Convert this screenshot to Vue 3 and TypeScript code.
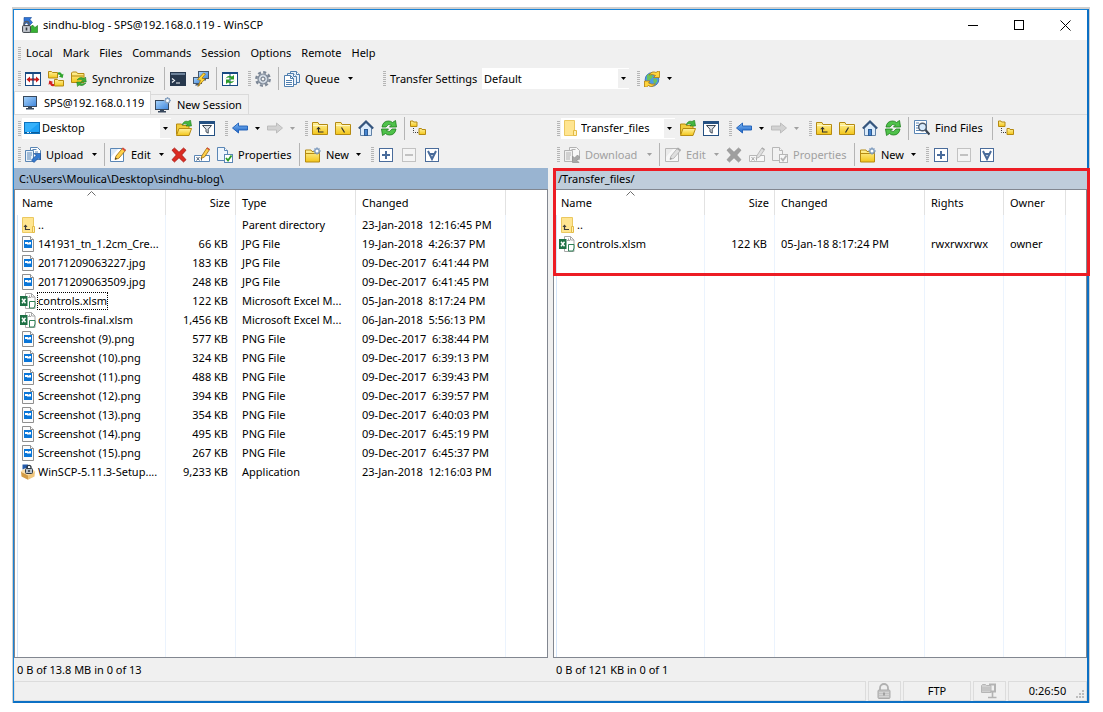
<script setup lang="ts">
import { ref } from 'vue'

interface FileRow {
  icon: string
  name: string
  size: string
  cells: string[]
  focused?: boolean
}

interface Pane {
  side: 'local' | 'remote'
  drive: string
  driveIcon: string
  rootIcon: string
  transfer: string
  transferIcon: string
  muted: boolean
  path: string
  columns: { label: string; cls: string }[]
  rows: FileRow[]
  summary: string
}

const menus = ['Local', 'Mark', 'Files', 'Commands', 'Session', 'Options', 'Remote', 'Help']
const preset = ref('Default')

const shot = (n: number, size: string, time: string): FileRow => ({
  icon: 'image',
  name: `Screenshot (${n}).png`,
  size,
  cells: ['PNG File', `09-Dec-2017  ${time}`],
})

const panes: Pane[] = [
  {
    side: 'local',
    drive: 'Desktop',
    driveIcon: 'desktop',
    rootIcon: 'root-local',
    transfer: 'Upload',
    transferIcon: 'upload',
    muted: false,
    path: 'C:\\Users\\Moulica\\Desktop\\sindhu-blog\\',
    columns: [
      { label: 'Name', cls: 'c-name' },
      { label: 'Size', cls: 'c-size' },
      { label: 'Type', cls: 'c-type' },
      { label: 'Changed', cls: 'c-date' },
    ],
    rows: [
      { icon: 'parent', name: '..', size: '', cells: ['Parent directory', '23-Jan-2018  12:16:45 PM'] },
      { icon: 'image', name: '141931_tn_1.2cm_Cre...', size: '66 KB', cells: ['JPG File', '19-Jan-2018  4:26:37 PM'] },
      { icon: 'image', name: '20171209063227.jpg', size: '183 KB', cells: ['JPG File', '09-Dec-2017  6:41:44 PM'] },
      { icon: 'image', name: '20171209063509.jpg', size: '248 KB', cells: ['JPG File', '09-Dec-2017  6:41:45 PM'] },
      { icon: 'excel', name: 'controls.xlsm', size: '122 KB', cells: ['Microsoft Excel M...', '05-Jan-2018  8:17:24 PM'], focused: true },
      { icon: 'excel', name: 'controls-final.xlsm', size: '1,456 KB', cells: ['Microsoft Excel M...', '06-Jan-2018  5:56:13 PM'] },
      shot(9, '577 KB', '6:38:44 PM'),
      shot(10, '324 KB', '6:39:13 PM'),
      shot(11, '488 KB', '6:39:43 PM'),
      shot(12, '394 KB', '6:39:57 PM'),
      shot(13, '354 KB', '6:40:03 PM'),
      shot(14, '495 KB', '6:45:19 PM'),
      shot(15, '267 KB', '6:45:37 PM'),
      { icon: 'setup', name: 'WinSCP-5.11.3-Setup....', size: '9,233 KB', cells: ['Application', '23-Jan-2018  12:16:03 PM'] },
    ],
    summary: '0 B of 13.8 MB in 0 of 13',
  },
  {
    side: 'remote',
    drive: 'Transfer_files',
    driveIcon: 'folder-plain',
    rootIcon: 'root-remote',
    transfer: 'Download',
    transferIcon: 'download',
    muted: true,
    path: '/Transfer_files/',
    columns: [
      { label: 'Name', cls: 'c-name' },
      { label: 'Size', cls: 'c-size' },
      { label: 'Changed', cls: 'c-date' },
      { label: 'Rights', cls: 'c-rights' },
      { label: 'Owner', cls: 'c-owner' },
    ],
    rows: [
      { icon: 'parent', name: '..', size: '', cells: ['', '', ''] },
      { icon: 'excel', name: 'controls.xlsm', size: '122 KB', cells: ['05-Jan-18 8:17:24 PM', 'rwxrwxrwx', 'owner'] },
    ],
    summary: '0 B of 121 KB in 0 of 1',
  },
]
</script>

<template>
  <svg class="sprite" aria-hidden="true">
    <defs>
      <linearGradient id="g-yellow" x1="0" y1="0" x2="0" y2="1">
        <stop offset="0" stop-color="#fff3a0" /><stop offset="1" stop-color="#f3c518" />
      </linearGradient>
      <linearGradient id="g-screen" x1="0" y1="0" x2="1" y2="1">
        <stop offset="0" stop-color="#a8d4fb" /><stop offset="1" stop-color="#3f86dc" />
      </linearGradient>
      <linearGradient id="g-blue" x1="0" y1="0" x2="0" y2="1">
        <stop offset="0" stop-color="#7db8f5" /><stop offset="1" stop-color="#1c62c4" />
      </linearGradient>
    </defs>
    <symbol id="i-app" viewBox="0 0 16 16">
      <path d="M2 .5h7.500l-1.500 2 2.500 3-3 3-3-2.500-2.500 2z" fill="#2f74d6" stroke="#174a96" stroke-width=".6" />
      <path d="M15.500 15.500h-8l2-2-2-2.500 3-3 2.500 2.500 2.500-2z" fill="#37b134" stroke="#157313" stroke-width=".6" />
      <path d="M2 9V7a2.500 2.500 0 0 1 5 0v2" fill="none" stroke="#565c66" stroke-width="1.400" />
      <rect x=".6" y="8.600" width="7.800" height="6.800" rx=".8" fill="#c6cbd2" stroke="#343a42" />
      <path d="M4.500 10.500v3" stroke="#343a42" stroke-width="1.600" />
    </symbol>
    <symbol id="i-compare" viewBox="0 0 16 16">
      <rect x=".5" y="1.500" width="15" height="13" fill="#fff" stroke="#174a82" />
      <path d="M0 2h16" stroke="#174a82" stroke-width="2" />
      <path d="M8 2v12" stroke="#174a82" stroke-width="1.400" />
      <path d="M1.500 8.500 5 5.500v2h6v-2l3.500 3-3.500 3v-2H5v2z" fill="#c61a1a" />
      <path d="M8 7v3" stroke="#174a82" />
    </symbol>
    <symbol id="i-syncdirs" viewBox="0 0 16 16">
      <path d="M.5.5h3l1 1h5v5.500h-9z" fill="url(#g-yellow)" stroke="#b58a12" />
      <path d="M6.500 8.500h3l1 1h5v5.500h-9z" fill="url(#g-yellow)" stroke="#b58a12" />
      <path d="M10 1.500q3-1 4 2l1.500-.8-.8 4.300-4-1.500 1.600-.8q-.8-1.500-2.300-1.200z" fill="#2fa32c" />
      <path d="M6 15q-3 1-4-2l-1.500.8.8-4.300 4 1.500-1.600.8q.8 1.500 2.300 1.200z" fill="#d32020" />
    </symbol>
    <symbol id="i-sync" viewBox="0 0 16 16">
      <path d="M.5 2 1.500 1h4l1 1.500h6.500v9H.5z" fill="url(#g-yellow)" stroke="#b58a12" />
      <path d="M1 5h11.500" stroke="#b58a12" />
      <path d="M6 9q3-4 7-1.500l1.500-1.500.8 5h-5l1.500-1.500q-2-1.500-5.800-.5z" fill="#3fae3a" stroke="#1d7a1a" stroke-width=".5" />
      <path d="M15 12q-3 4-7 2l-1.500 1.500-.8-4.500h5l-1.500 1.400q2 .9 5.800-.4z" fill="#3fae3a" stroke="#1d7a1a" stroke-width=".5" />
    </symbol>
    <symbol id="i-term" viewBox="0 0 16 16">
      <rect y="1" width="16" height="14" fill="#27384d" />
      <rect x="1" y="2" width="14" height="2" fill="#6c8199" />
      <path d="M2 7.500 4.500 9.500 2 11.500M6 12h4" fill="none" stroke="#f3f6fa" stroke-width="1.200" />
    </symbol>
    <symbol id="i-putty" viewBox="0 0 16 16">
      <rect x="5.500" y=".5" width="10" height="7" fill="url(#g-screen)" stroke="#44566c" />
      <path d="M9 8h4v1.500H9z" fill="#44566c" />
      <rect x=".5" y="6.500" width="8" height="6" fill="url(#g-screen)" stroke="#44566c" />
      <path d="M3 13h4v1.500H2z" fill="#44566c" />
      <path d="M10.500 2 4.500 8.500l3 .8L5 15.500 12 8l-3-.8 3.500-4.200z" fill="#ffd63a" stroke="#a8780d" stroke-width=".8" />
    </symbol>
    <symbol id="i-syncbrowse" viewBox="0 0 16 16">
      <rect x=".5" y="1.500" width="15" height="13" fill="#fff" stroke="#174a82" />
      <path d="M0 2h16" stroke="#174a82" stroke-width="2" />
      <path d="M8 3v11" stroke="#174a82" />
      <path d="M3.500 7.500Q6 3.500 10 5.500L12 4v4.500H7.500L9 7Q6.500 6 3.500 7.500z" fill="#2d9b2a" />
      <path d="M12.500 9.500Q10 13.500 6 11.500L4 13V8.500h4.500L7 10q2.500 1 5.500-.5z" fill="#2d9b2a" />
    </symbol>
    <symbol id="i-gear" viewBox="0 0 16 16">
      <circle cx="8" cy="8" r="6.700" fill="none" stroke="#7c8796" stroke-width="2.400" stroke-dasharray="3 2.260" />
      <circle cx="8" cy="8" r="5" fill="#c3cdd9" stroke="#7c8796" stroke-width="1.200" />
      <circle cx="8" cy="8" r="3.300" fill="none" stroke="#dce3eb" stroke-width="1" />
      <circle cx="8" cy="8" r="2" fill="#f3f3f3" stroke="#66707d" />
    </symbol>
    <symbol id="i-queue" viewBox="0 0 16 16">
      <path d="M6.500.5h6l3 3v8h-9z" fill="#e8f1fb" stroke="#4f7eae" />
      <path d="M12.500.5v3h3" fill="#fff" stroke="#4f7eae" />
      <path d="M3.500 2.500h6l3 3v8h-9z" fill="#e8f1fb" stroke="#4f7eae" />
      <path d="M9.500 2.500v3h3" fill="#fff" stroke="#4f7eae" />
      <path d="M.5 4.500h6l3 3v8h-9z" fill="#fff" stroke="#4f7eae" />
      <path d="M6.500 4.500v3h3M2 9.500h6M2 11.500h6M2 13.500h6" fill="none" stroke="#4f7eae" />
    </symbol>
    <symbol id="i-globe" viewBox="0 0 16 16">
      <circle cx="8" cy="8.500" r="6.800" fill="#4e9be6" stroke="#2b68a8" stroke-width=".8" />
      <path d="M3 4q3-2 5 0t-1 4-4 1zM9 8q3-1 4 1t-3 4z" fill="#6cc35c" />
      <path d="M5 4Q8-.5 12 1.500L14 .2h1.500V6.500H9.500l2-2Q8 2.800 5 4z" fill="#ffd43c" stroke="#b07d0a" stroke-width=".8" />
      <path d="M11.500 13Q8 17 4.500 14.500L2.500 16H.5V10h5.500l-1.500 2q3 1.800 7 1z" fill="#ffd43c" stroke="#b07d0a" stroke-width=".8" />
    </symbol>
    <symbol id="i-monitor" viewBox="0 0 16 16">
      <rect x="1.500" y="1.500" width="13" height="10" fill="url(#g-screen)" stroke="#38485c" />
      <path d="M6 12h4v1h2v1.500H4V13h2z" fill="#38485c" />
    </symbol>
    <symbol id="i-newsession" viewBox="0 0 16 16">
      <rect x=".5" y="3.500" width="13" height="9" fill="url(#g-screen)" stroke="#38485c" />
      <path d="M5 13h4v1h2v1.500H3V14h2z" fill="#38485c" />
      <circle cx="12.500" cy="3.500" r="2.200" fill="#fff" stroke="#8ba5c2" stroke-width="1.400" />
      <path d="M12.500-.2v1.500M12.500 5.700v1.500M8.800 3.500h1.500M14.700 3.500H16M10 1l1 1M15 1l-1 1M10 6l1-1M15 6l-1-1" stroke="#8ba5c2" />
    </symbol>
    <symbol id="i-desktop" viewBox="0 0 16 16">
      <rect x=".5" y="2.500" width="15" height="11" fill="#1ea0f5" stroke="#0b72bd" />
      <path d="M1 3h14L3 13H1z" fill="#35b1fb" />
      <path d="M1 12.500h14" stroke="#0c5d9c" />
      <path d="M3 12.500h2M6 12.500h1" stroke="#d5ecfc" />
    </symbol>
    <symbol id="i-folder-plain" viewBox="0 0 16 16">
      <path d="M1.500.5h10v15h-10z" fill="#ffe590" stroke="#ebc860" />
      <path d="M10.500 10.500h3v5h-3z" fill="#ffefb4" stroke="#e3bb45" />
    </symbol>
    <symbol id="i-open" viewBox="0 0 16 16">
      <path d="M.5 14.500V4h5l1 1.500h6.500v3" fill="#f2cd3c" stroke="#b58a12" />
      <path d="M.5 15.500 3 8.500h12.500L13 15.500z" fill="url(#g-yellow)" stroke="#b58a12" />
      <path d="M6 5Q8 0 12 1.500L14.500.2 15.500 6H10L11.500 4.500Q8.500 3 6 5z" fill="#44b640" stroke="#1d7a1a" stroke-width=".6" />
    </symbol>
    <symbol id="i-filter" viewBox="0 0 16 16">
      <rect x=".5" y="1.500" width="15" height="14" fill="#fff" stroke="#245082" />
      <path d="M0 2.500h16" stroke="#245082" stroke-width="3" />
      <path d="M3.500 5.500h9L9.200 9.200v4l-2.200-1.400V9.200z" fill="#dfe3e8" stroke="#3c4652" />
    </symbol>
    <symbol id="i-back" viewBox="0 0 16 16">
      <path d="M.5 8 6.500 3v3h9v4h-9v3z" fill="url(#g-blue)" stroke="#1a5bb5" stroke-width=".9" />
    </symbol>
    <symbol id="i-fwd" viewBox="0 0 16 16">
      <path d="M15.500 8 9.500 3v3h-9v4h9v3z" fill="#d2d2d2" stroke="#b9b9b9" stroke-width=".9" />
    </symbol>
    <symbol id="i-folder" viewBox="0 0 16 16">
      <path d="M.5 14.500V2.500h5.500l1 2h8.500v10z" fill="url(#g-yellow)" stroke="#b58a12" />
      <path d="M1 5.500h14" stroke="#fff7c4" />
    </symbol>
    <symbol id="i-up" viewBox="0 0 16 16">
      <use href="#i-folder" />
      <path d="M6.500 7.500v4.500h5" fill="none" stroke="#2d2d2d" stroke-width="1.100" />
      <path d="M4.200 9.200 6.500 6.700 8.800 9.200z" fill="#2d2d2d" />
    </symbol>
    <symbol id="i-root-local" viewBox="0 0 16 16">
      <use href="#i-folder" /><path d="m6.500 7.500 3 5" stroke="#2d2d2d" stroke-width="1.200" />
    </symbol>
    <symbol id="i-root-remote" viewBox="0 0 16 16">
      <use href="#i-folder" /><path d="m9.500 7.500-3 5" stroke="#2d2d2d" stroke-width="1.200" />
    </symbol>
    <symbol id="i-home" viewBox="0 0 16 16">
      <path d="M2.500 8v7.500h11V8L8 2.500z" fill="#dcebfa" stroke="#6182a8" />
      <rect x="6.500" y="9.500" width="3" height="6" fill="#4886cf" stroke="#2d5c95" />
      <path d="M.8 8.500 8 1.500l7.200 7" fill="none" stroke="#35557d" stroke-width="2" />
    </symbol>
    <symbol id="i-refresh" viewBox="0 0 16 16">
      <path d="M1 7Q2 1 7.500 1q2.500 0 4 1.500L14.500.5 15.500 7H8.500l2-2Q7 3 5 7z" fill="#4fc24a" stroke="#1c7d1a" stroke-width=".8" />
      <path d="M15 9q-1 6-6.500 6-2.500 0-4-1.500l-3 2L.5 9h7l-2 2q3.500 2 5.500-2z" fill="#4fc24a" stroke="#1c7d1a" stroke-width=".8" />
    </symbol>
    <symbol id="i-tree" viewBox="0 0 16 16">
      <path d="M.5 1h2.500l.5 1h3.500v4.500h-6.500z" fill="url(#g-yellow)" stroke="#b58a12" />
      <path d="M9 8.500h2.500l.5 1h3.500v5H9z" fill="url(#g-yellow)" stroke="#b58a12" />
      <path d="M3.500 8v4.500H8" fill="none" stroke="#3a3a3a" stroke-dasharray="1 1" />
    </symbol>
    <symbol id="i-upload" viewBox="0 0 16 16">
      <path d="M5.500.5h7l3 3v9h-10z" fill="#fff" stroke="#5a86b5" />
      <path d="M.5 3.500h8v11h-8z" fill="#eaf2fa" stroke="#5a86b5" />
      <path d="M2 6h5M2 8h5M2 10h4M2 12h4M7.500 2.500h4M10 5h3" stroke="#5a86b5" />
      <path d="M9 6.500h6.500V13L13.500 11l-4.500 4.500-2.500-2.500L11 8.500z" fill="#3379cf" stroke="#1c4f93" stroke-width=".7" />
    </symbol>
    <symbol id="i-download" viewBox="0 0 16 16">
      <path d="M5.500.5h7l3 3v9h-10z" fill="#f7f7f7" stroke="#b3b3b3" />
      <path d="M.5 3.500h8v11h-8z" fill="#f0f0f0" stroke="#b3b3b3" />
      <path d="M2 6h5M2 8h5M2 10h4M2 12h4M7.500 2.500h4" stroke="#b3b3b3" />
      <path d="M15 15.500H8.500V9l2 2 3-3 2.300 2.300-3 3z" fill="#a8a8a8" stroke="#8f8f8f" stroke-width=".7" />
    </symbol>
    <symbol id="i-edit" viewBox="0 0 16 16">
      <path d="M.5 1.500h13v13H.5z" fill="#fff" stroke="#5a86b5" />
      <path d="M1 2h7L1 10z" fill="#dbe9f7" />
      <path d="M5 12.500 6 9 12.500 1.200 15.500 3.500 8.800 11.300z" fill="#ffd04a" stroke="#96690f" stroke-width=".8" />
      <path d="M11.800 2 13 .6l3 2.200-1.200 1.500z" fill="#d84c3f" />
      <path d="M5 12.500 5.500 10.500 7 11.700z" fill="#333" />
    </symbol>
    <symbol id="i-delete" viewBox="0 0 16 16">
      <path d="M1 3.200 3.500 1 8 5.300 12.500 1 15 3.200 10.700 8 15 12.700 12.500 15 8 10.700 3.500 15 1 12.700 5.300 8z" fill="#dc2b22" stroke="#a3150f" stroke-width=".8" />
    </symbol>
    <symbol id="i-rename" viewBox="0 0 16 16">
      <path d="M.5 8.500h15v6H.5z" fill="#fff" stroke="#5a86b5" />
      <path d="m2.500 10 3 3.500M5.500 10l-3 3.500M7.500 10v3.500" stroke="#4a5f78" />
      <path d="M7 11.500 8 8.500 13 .8 15.600 2.500 10.500 10z" fill="#ffd04a" stroke="#96690f" stroke-width=".8" />
      <path d="M12.500 1.500 13.200.4l2.600 1.700-.8 1.200z" fill="#d84c3f" />
    </symbol>
    <symbol id="i-props" viewBox="0 0 16 16">
      <path d="M.5.5h7l3 3v10H.5z" fill="#eff6fd" stroke="#5a86b5" />
      <path d="M7.500.5v3h3" fill="#fff" stroke="#5a86b5" />
      <rect x="7.500" y="7.500" width="8" height="8" fill="#fff" stroke="#5a86b5" />
      <path d="m9 11 2 2.500 3.500-5" fill="none" stroke="#2a9c27" stroke-width="1.800" />
    </symbol>
    <symbol id="i-newfile" viewBox="0 0 16 16">
      <path d="M.5 15V3h5.500l1 1.500h7.500V15z" fill="url(#g-yellow)" stroke="#b58a12" />
      <path d="M1 6.500h13" stroke="#b58a12" />
      <circle cx="12" cy="4" r="2.200" fill="#fff" stroke="#7f9cbe" stroke-width="1.400" />
      <path d="M12 .2v1.500M12 6.300v1.500M8.200 4h1.500M14.300 4H16M9.500 1.500l1 1M14.500 1.500l-1 1M9.500 6.500l1-1M14.500 6.500l-1-1" stroke="#7f9cbe" />
    </symbol>
    <symbol id="i-plus" viewBox="0 0 16 16">
      <rect x="1.500" y="1.500" width="13" height="13" fill="#fff" stroke="#4a6c9b" />
      <path d="M4 8h8M8 4v8" stroke="#4a6c9b" stroke-width="2" />
    </symbol>
    <symbol id="i-minus" viewBox="0 0 16 16">
      <rect x="1.500" y="1.500" width="13" height="13" fill="#f4f4f4" stroke="#c2c2c2" />
      <path d="M4 8h8" stroke="#c2c2c2" stroke-width="2" />
    </symbol>
    <symbol id="i-invert" viewBox="0 0 16 16">
      <rect x="1.500" y="1.500" width="13" height="13" fill="#fff" stroke="#4a6c9b" />
      <path d="m4 4 4 8 4-8M5 7h6" fill="none" stroke="#4a6c9b" stroke-width="2" />
    </symbol>
    <symbol id="i-find" viewBox="0 0 16 16">
      <path d="M.5.500h12v13H.5z" fill="#fff" stroke="#5a86b5" />
      <path d="M2 3h3M2 5.500h3M2 8h3M2 10.500h4" stroke="#5a86b5" />
      <circle cx="8.500" cy="7" r="3.800" fill="#d5e9fb" stroke="#4c5a6b" stroke-width="1.400" />
      <path d="m11.500 10 4 4.500" stroke="#39434f" stroke-width="2.200" />
    </symbol>
    <symbol id="i-parent" viewBox="0 0 16 16">
      <path d="M2.500.5h11v15h-11z" fill="#ffe590" stroke="#ebc860" />
      <path d="M12.500 9.500h2v6h-2z" fill="#ffefb4" stroke="#e3bb45" />
      <path d="M5.500 8.500v4H10" fill="none" stroke="#3b3b3b" stroke-width="1.200" />
      <path d="M3.500 10 5.500 7.500 7.500 10z" fill="#3b3b3b" />
    </symbol>
    <symbol id="i-image" viewBox="0 0 16 16">
      <path d="M2.500.5h8l3 3v12h-11z" fill="#fbfbfb" stroke="#8f8f8f" />
      <path d="M10.500.5v3h3" fill="#fff" stroke="#8f8f8f" />
      <rect x="4" y="4" width="8" height="8" fill="#0a76d8" />
      <path d="M5 6h3l.5 1 1-1H11v2l-1 1-1-1-1 1-1-1H5z" fill="#fff" />
    </symbol>
    <symbol id="i-excel" viewBox="0 0 16 16">
      <path d="M5.500.5h6l3.500 3.500v11.500H5.500z" fill="#fff" stroke="#a8a8a8" />
      <path d="M11.500.5v3.500h3.500M8 4.500h3M9.500 2.500v2" fill="none" stroke="#a8a8a8" />
      <path d="M9.500 8.500h5.500v3.500l-1 3h-4.500z" fill="#fff" stroke="#2f8157" />
      <rect y="3" width="7.500" height="10" fill="#1d7044" />
      <path d="m2 5.800 3.500 4.500M5.500 5.800 2 10.300" stroke="#fff" stroke-width="1.400" />
    </symbol>
    <symbol id="i-setup" viewBox="0 0 16 16">
      <path d="M1 7.500 8 11v4.800L1.500 12.500z" fill="#d39c46" />
      <path d="M15 7.500 8 11v4.800L14.500 12.500z" fill="#f0c67c" />
      <path d="M.5 7.500 4 5l4 3L12 5l3.500 2.500-7.500 4z" fill="#f8dca5" />
      <path d="M2.500.5h5.500v5l-2-1.500-3.500 1.500z" fill="#255cab" />
      <path d="M7 4.500V3.300a2 2 0 0 1 4 0v1.200" fill="none" stroke="#303841" stroke-width="1.300" />
      <rect x="5.500" y="4.500" width="7" height="5" rx="1" fill="#b7c1cd" stroke="#303841" />
      <path d="M9 6v2" stroke="#303841" stroke-width="1.500" />
    </symbol>
    <symbol id="i-lock" viewBox="0 0 16 16">
      <path d="M4 7.500V5a4 4 0 0 1 8 0v2.500" fill="none" stroke="#b1b1b1" stroke-width="1.800" />
      <rect x="2" y="7" width="12" height="8.500" rx="1" fill="#c3c3c3" stroke="#ababab" />
      <path d="M3 9.500h10M3 11.500h10M3 13.500h10" stroke="#d4d4d4" /><path d="M8 9.500v3" stroke="#8f8f8f" stroke-width="1.400" />
    </symbol>
    <symbol id="i-zip" viewBox="0 0 16 16">
      <path d="M.5 2.500 1.500 1.500h3l1 1h4.500v7H.5z" fill="#d0d0d0" stroke="#b6b6b6" />
      <path d="M1 5h8.500M1 7h8.500" stroke="#bababa" />
      <path d="M8 1.500h6v7h-4.500" fill="none" stroke="#b3b3b3" stroke-width="2" />
      <path d="M11.500 9v5M7 14.500h8.500" fill="none" stroke="#b3b3b3" stroke-width="1.600" />
    </symbol>
    <symbol id="i-caret" viewBox="0 0 5 3"><path d="M0 0h5L2.500 3z" fill="currentColor" /></symbol>
  </svg>

  <main class="window">
    <header class="title">
      <svg class="ic"><use href="#i-app" /></svg>
      <h1>sindhu-blog - SPS@192.168.0.119 - WinSCP</h1>
      <div class="winctl">
        <button type="button" aria-label="Minimize"><svg viewBox="0 0 11 11"><path d="M0 5.500h10" /></svg></button>
        <button type="button" aria-label="Maximize"><svg viewBox="0 0 11 11"><rect x=".5" y=".5" width="9" height="9" /></svg></button>
        <button type="button" aria-label="Close"><svg viewBox="0 0 11 11"><path d="m.5.5 10 10M10.500.5l-10 10" /></svg></button>
      </div>
    </header>

    <nav class="menu">
      <span class="grip"></span>
      <button v-for="m in menus" :key="m" type="button">{{ m }}</button>
    </nav>

    <div class="toolbar main-bar">
      <div class="band b-sync">
        <span class="grip"></span>
        <button type="button" class="tb" aria-label="Compare directories"><svg class="ic"><use href="#i-compare" /></svg></button>
        <button type="button" class="tb" aria-label="Synchronize directories"><svg class="ic"><use href="#i-syncdirs" /></svg></button>
        <button type="button" class="tb w-sync"><svg class="ic"><use href="#i-sync" /></svg>Synchronize</button>
        <span class="sep"></span>
        <button type="button" class="tb" aria-label="Open terminal"><svg class="ic"><use href="#i-term" /></svg></button>
        <button type="button" class="tb" aria-label="Open in PuTTY"><svg class="ic"><use href="#i-putty" /></svg></button>
        <span class="sep"></span>
        <button type="button" class="tb" aria-label="Synchronize browsing"><svg class="ic"><use href="#i-syncbrowse" /></svg></button>
      </div>
      <div class="band b-queue">
        <span class="grip"></span>
        <button type="button" class="tb" aria-label="Preferences"><svg class="ic"><use href="#i-gear" /></svg></button>
        <span class="sep"></span>
        <button type="button" class="tb w-queue"><svg class="ic"><use href="#i-queue" /></svg>Queue<svg class="caret"><use href="#i-caret" /></svg></button>
      </div>
      <div class="band b-preset">
        <span class="grip"></span>
        <label for="preset">Transfer Settings</label>
        <div class="combo">
          <select id="preset" v-model="preset"><option>Default</option></select>
          <span class="drop"><svg class="caret"><use href="#i-caret" /></svg></span>
        </div>
      </div>
      <div class="band">
        <span class="grip"></span>
        <button type="button" class="tb w-arrow" aria-label="Transfer options"><svg class="ic"><use href="#i-globe" /></svg><svg class="caret"><use href="#i-caret" /></svg></button>
      </div>
    </div>

    <div class="tabs">
      <button type="button" class="tab active"><svg class="ic"><use href="#i-monitor" /></svg>SPS@192.168.0.119</button>
      <button type="button" class="tab"><svg class="ic"><use href="#i-newsession" /></svg>New Session</button>
    </div>

    <div class="panes">
      <section v-for="p in panes" :key="p.side" class="pane" :class="p.side">
        <div class="toolbar nav-bar">
          <div class="band b-drive">
            <span class="grip"></span>
            <div class="combo">
              <svg class="ic"><use :href="`#i-${p.driveIcon}`" /></svg>
              <select :aria-label="`${p.side} directory`"><option>{{ p.drive }}</option></select>
              <span class="drop"><svg class="caret"><use href="#i-caret" /></svg></span>
            </div>
            <button type="button" class="tb" aria-label="Open directory"><svg class="ic"><use href="#i-open" /></svg></button>
            <button type="button" class="tb" aria-label="Filter"><svg class="ic"><use href="#i-filter" /></svg></button>
          </div>
          <div class="band b-history">
            <span class="grip"></span>
            <button type="button" class="tb w-arrow" aria-label="Back"><svg class="ic"><use href="#i-back" /></svg><svg class="caret"><use href="#i-caret" /></svg></button>
            <button type="button" class="tb w-arrow" aria-label="Forward" disabled><svg class="ic"><use href="#i-fwd" /></svg><svg class="caret"><use href="#i-caret" /></svg></button>
          </div>
          <div class="band">
            <span class="grip"></span>
            <button type="button" class="tb" aria-label="Parent directory"><svg class="ic"><use href="#i-up" /></svg></button>
            <button type="button" class="tb" aria-label="Root directory"><svg class="ic"><use :href="`#i-${p.rootIcon}`" /></svg></button>
            <button type="button" class="tb" aria-label="Home directory"><svg class="ic"><use href="#i-home" /></svg></button>
            <button type="button" class="tb" aria-label="Refresh"><svg class="ic"><use href="#i-refresh" /></svg></button>
            <span class="sep"></span>
            <template v-if="p.side === 'remote'">
              <button type="button" class="tb w-find"><svg class="ic"><use href="#i-find" /></svg>Find Files</button>
              <span class="sep"></span>
            </template>
            <button type="button" class="tb" aria-label="Directory tree"><svg class="ic"><use href="#i-tree" /></svg></button>
          </div>
        </div>

        <div class="toolbar file-bar">
          <div class="band b-files">
            <span class="grip"></span>
            <button type="button" class="tb w-transfer" :disabled="p.muted"><svg class="ic"><use :href="`#i-${p.transferIcon}`" /></svg>{{ p.transfer }}<svg class="caret"><use href="#i-caret" /></svg></button>
            <span class="sep"></span>
            <button type="button" class="tb w-edit" :disabled="p.muted"><svg class="ic gray"><use href="#i-edit" /></svg>Edit<svg class="caret"><use href="#i-caret" /></svg></button>
            <button type="button" class="tb" aria-label="Delete" :disabled="p.muted"><svg class="ic gray"><use href="#i-delete" /></svg></button>
            <button type="button" class="tb" aria-label="Rename" :disabled="p.muted"><svg class="ic gray"><use href="#i-rename" /></svg></button>
            <button type="button" class="tb w-props" :disabled="p.muted"><svg class="ic gray"><use href="#i-props" /></svg>Properties</button>
            <span class="sep"></span>
            <button type="button" class="tb w-new"><svg class="ic"><use href="#i-newfile" /></svg>New<svg class="caret"><use href="#i-caret" /></svg></button>
          </div>
          <div class="band">
            <span class="grip"></span>
            <button type="button" class="tb" aria-label="Select files"><svg class="ic"><use href="#i-plus" /></svg></button>
            <button type="button" class="tb" aria-label="Unselect files" disabled><svg class="ic"><use href="#i-minus" /></svg></button>
            <button type="button" class="tb" aria-label="Invert selection"><svg class="ic"><use href="#i-invert" /></svg></button>
          </div>
        </div>

        <div class="browser">
          <div class="path">{{ p.path }}</div>
          <div class="list">
            <table>
              <colgroup>
                <col v-for="c in p.columns" :key="c.label" :class="c.cls" />
                <col />
              </colgroup>
              <thead>
                <tr>
                  <th v-for="(c, i) in p.columns" :key="c.label" scope="col" :class="c.cls">
                    {{ c.label }}
                    <svg v-if="i === 0" class="sort" viewBox="0 0 9 5"><path d="M.5 4.500 4.500.5l4 4" /></svg>
                  </th>
                  <td></td>
                </tr>
              </thead>
              <tbody>
                <tr v-for="r in p.rows" :key="r.name" class="row">
                  <td class="c-name">
                    <span class="file"><svg class="ic"><use :href="`#i-${r.icon}`" /></svg><span class="fname" :class="{ focused: r.focused }">{{ r.name }}</span></span>
                  </td>
                  <td class="c-size">{{ r.size }}</td>
                  <td v-for="(c, i) in r.cells" :key="i">{{ c }}</td>
                  <td></td>
                </tr>
                <tr class="fill">
                  <td v-for="c in p.columns" :key="c.label"></td>
                  <td></td>
                </tr>
              </tbody>
            </table>
          </div>
          <div v-if="p.side === 'remote'" class="marker"></div>
        </div>
        <div class="summary">{{ p.summary }}</div>
      </section>
    </div>

    <footer class="status">
      <div class="cell grow"></div>
      <div class="cell small"><svg class="ic"><use href="#i-lock" /></svg></div>
      <div class="cell proto">FTP</div>
      <div class="cell small"><svg class="ic"><use href="#i-zip" /></svg></div>
      <div class="cell time">0:26:50
        <svg class="resize" viewBox="0 0 9 9"><path d="M6 0h2v2H6zM3 3h2v2H3zM6 3h2v2H6zM0 6h2v2H0zM3 6h2v2H3zM6 6h2v2H6z" /></svg>
      </div>
    </footer>
  </main>
</template>

<style>
html,
body,
#app {
  height: 100%;
}
body {
  background: #fff;
}
#app {
  box-sizing: border-box;
  padding: 9px 14px 9px 13px;
}
</style>

<style scoped>
* {
  box-sizing: border-box;
}
.sprite {
  position: absolute;
  width: 0;
  height: 0;
}
.window {
  display: flex;
  flex-direction: column;
  height: 100%;
  background: #f0f0f0;
  border: 1px solid #1883d7;
  border-right: 2px solid #0c70c4;
  border-bottom: 2px solid #0c70c4;
  box-shadow: 0 -1px 0 1px #cfcfcf;
  color: #000;
  font: 11px/16px "Noto Sans", "Open Sans", sans-serif;
  white-space: nowrap;
}
button,
select {
  font: inherit;
  color: inherit;
  background: none;
  border: 0;
  padding: 0;
  margin: 0;
}
.ic {
  width: 16px;
  height: 16px;
  flex: none;
}
.caret {
  width: 5px;
  height: 3px;
  flex: none;
}
.title {
  display: flex;
  align-items: center;
  height: 30px;
  flex: none;
  padding-left: 8px;
  gap: 5px;
  background: #fff;
}
.title h1 {
  font: inherit;
  margin: 0;
  flex: 1;
}
.winctl {
  display: flex;
  margin-right: -1px;
}
.winctl button {
  width: 46px;
  height: 30px;
  display: grid;
  place-items: center;
}
.winctl svg {
  width: 11px;
  height: 11px;
  fill: none;
  stroke: #000;
}
.menu {
  display: flex;
  align-items: center;
  height: 26px;
  flex: none;
  padding-left: 4px;
  gap: 10px;
}
.grip {
  width: 3px;
  height: 15px;
  margin-right: 1px;
  flex: none;
  background: repeating-linear-gradient(#b5b5b5 0 1px, transparent 1px 2px);
}
.menu .grip {
  height: 13px;
  margin-right: -5px;
}
.toolbar {
  display: flex;
  flex: none;
}
.main-bar {
  height: 25px;
}
.nav-bar {
  height: 26px;
}
.file-bar {
  height: 27px;
}
.band {
  display: flex;
  align-items: center;
  flex: none;
  padding-left: 4px;
}
.tb {
  display: flex;
  align-items: center;
  gap: 5px;
  width: 23px;
  height: 22px;
  flex: none;
  padding: 0 4px 0 3px;
}
.tb .caret {
  margin-left: auto;
}
.tb:disabled {
  color: #a0a0a0;
}
.tb:disabled .gray {
  filter: grayscale(1);
  opacity: 0.5;
}
.sep {
  width: 6px;
  height: 23px;
  flex: none;
  background: linear-gradient(#b4b4b4, #b4b4b4) 3px 0 / 1px 100% no-repeat;
}
.b-sync {
  width: 230px;
}
.b-queue {
  width: 135px;
}
.b-preset {
  width: 254px;
}
.b-preset label {
  width: 95px;
  padding-left: 3px;
}
.w-sync {
  width: 93px;
}
.w-queue {
  width: 76px;
}
.w-arrow {
  width: 35px;
}
.combo {
  position: relative;
  display: flex;
  align-items: center;
  flex: 1;
  height: 21px;
  margin-right: 2px;
  padding-left: 2px;
  background: #fff;
}
.b-preset .combo {
  margin-right: 4px;
}
.combo select {
  appearance: none;
  flex: 1;
  min-width: 0;
  padding-left: 2px;
  outline: 0;
}
.b-preset select {
  padding-left: 0;
}
.drop {
  position: absolute;
  top: 1px;
  right: 0;
  bottom: 1px;
  width: 11px;
  display: grid;
  place-items: center;
  background: #f0f0f0;
  pointer-events: none;
}
.tabs {
  display: flex;
  align-items: flex-end;
  height: 24px;
  flex: none;
  border-bottom: 1px solid #dadada;
}
.tab {
  display: flex;
  align-items: center;
  gap: 6px;
  width: 98px;
  height: 20px;
  padding: 0 5px 0 4px;
  border: 1px solid #dadada;
  border-width: 1px 1px 0 0;
}
.tab.active {
  width: 137px;
  height: 23px;
  padding: 0 6px 0 7px;
  background: #fff;
  border-left-width: 1px;
}
.panes {
  display: flex;
  gap: 5px;
  flex: 1;
  min-height: 0;
}
.pane {
  display: flex;
  flex-direction: column;
  flex: 1 1 0;
  min-width: 0;
}
.b-drive {
  margin-right: 2px;
}
.local .b-drive {
  width: 205px;
}
.remote .b-drive {
  width: 170px;
}
.b-history {
  width: 80px;
}
.w-find {
  width: 78px;
}
.local .w-transfer {
  width: 79px;
}
.remote .w-transfer {
  width: 95px;
}
.w-edit {
  width: 61px;
}
.w-props {
  width: 82px;
}
.w-new {
  width: 63px;
}
.local .b-files {
  width: 353px;
}
.remote .b-files {
  width: 369px;
}
.browser {
  position: relative;
  display: flex;
  flex-direction: column;
  flex: 1;
  min-height: 0;
}
.path {
  height: 21px;
  line-height: 21px;
  flex: none;
  padding-left: 5px;
  background: #99b4d1;
}
.remote .path {
  background: #bfcddb;
}
.list {
  display: grid;
  flex: 1;
  min-height: 0;
  padding-left: 2px;
  background: #fff;
  border: 1px solid #828790;
}
table {
  width: 100%;
  height: 100%;
  table-layout: fixed;
  border-collapse: separate;
  border-spacing: 0;
}
col.c-name {
  width: 149px;
}
col.c-size {
  width: 70px;
}
col.c-type {
  width: 120px;
}
col.c-date {
  width: 150px;
}
col.c-rights {
  width: 79px;
}
col.c-owner {
  width: 62px;
}
th,
td {
  padding: 0 0 0 6px;
  text-align: left;
  font-weight: 400;
  overflow: hidden;
  border-right: 1px solid #ebf3fd;
  white-space: pre;
}
th {
  position: relative;
  height: 25px;
  border-right-color: #e2e2e2;
  white-space: normal;
}
thead td,
tbody td:last-child {
  border-right: 0;
}
th.c-name {
  padding-left: 5px;
}
th.c-size {
  text-align: right;
  padding: 0 5px 0 0;
}
td.c-size {
  text-align: right;
  padding: 0 7px 0 0;
}
tbody td:first-child {
  padding-left: 2px;
  border-left: 1px solid #d5e6fa;
}
.row {
  height: 19px;
}
.row td {
  height: 19px;
  line-height: 18px;
}
.file {
  display: flex;
  align-items: center;
  gap: 1px;
}
.fname {
  padding: 0 1px;
  height: 18px;
}
.focused {
  outline: 1px dotted #000;
  outline-offset: -1px;
}
.sort {
  position: absolute;
  top: 1px;
  left: 50%;
  width: 9px;
  height: 5px;
  margin-left: -4px;
  fill: none;
  stroke: #6d6d6d;
}
.marker {
  position: absolute;
  top: 0;
  left: 0;
  right: -3px;
  height: 108px;
  border: 3px solid #ed1c24;
  pointer-events: none;
}
.summary {
  height: 23px;
  line-height: 23px;
  flex: none;
  padding-left: 3px;
}
.status {
  display: flex;
  gap: 2px;
  height: 20px;
  flex: none;
}
.cell {
  position: relative;
  display: flex;
  align-items: center;
  justify-content: center;
  border: 1px solid #dcdcdc;
}
.grow {
  flex: 1;
}
.small {
  width: 33px;
  padding-right: 2px;
}
.proto {
  width: 68px;
}
.time {
  width: 79px;
}
.resize {
  position: absolute;
  right: 1px;
  bottom: 1px;
  width: 9px;
  height: 9px;
  fill: #bdbdbd;
}
</style>
